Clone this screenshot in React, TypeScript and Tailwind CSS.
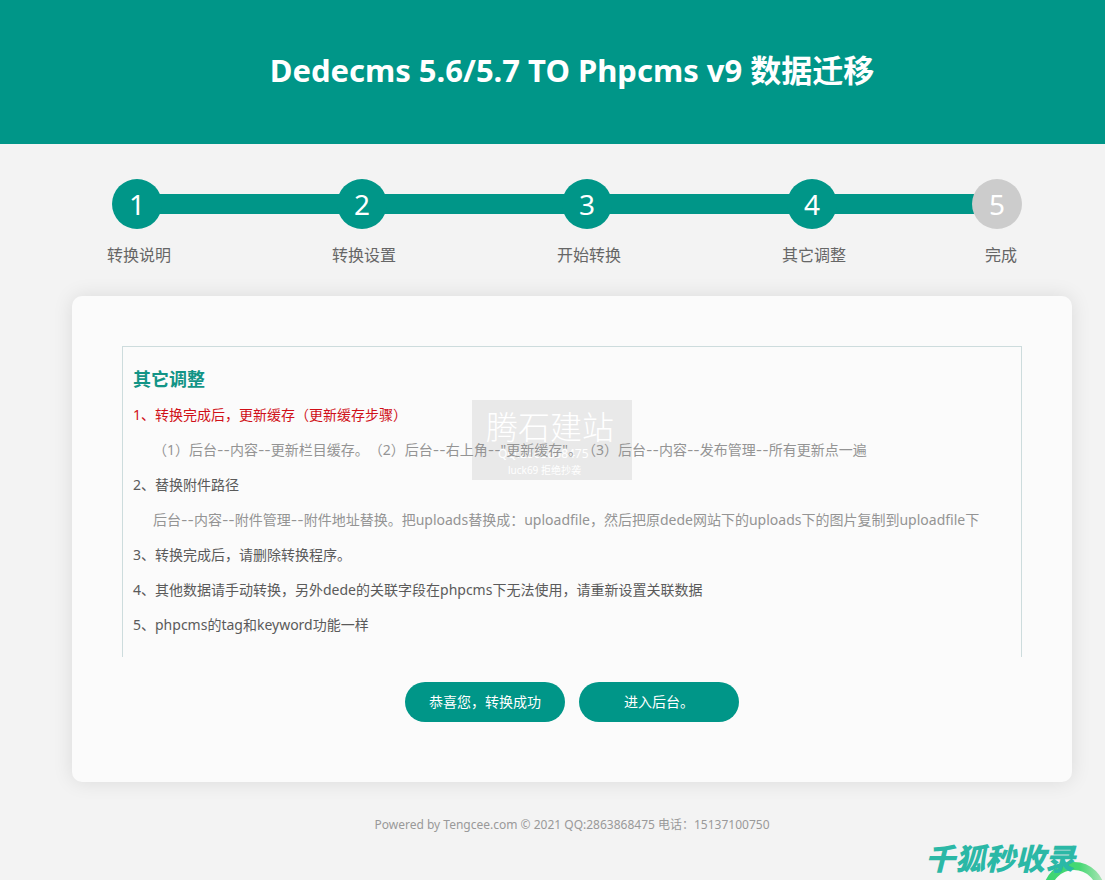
import React from 'react';

const steps = [
  { no: 1, label: '转换说明', done: true },
  { no: 2, label: '转换设置', done: true },
  { no: 3, label: '开始转换', done: true },
  { no: 4, label: '其它调整', done: true },
  { no: 5, label: '完成', done: false },
];

const notes = [
  { text: '1、转换完成后，更新缓存（更新缓存步骤）', style: 'text-[#d01018]' },
  {
    text: '（1）后台--内容--更新栏目缓存。（2）后台--右上角--"更新缓存"。（3）后台--内容--发布管理--所有更新点一遍',
    style: 'pl-5 text-[#949494]',
  },
  { text: '2、替换附件路径', style: 'text-[#5a5a5a]' },
  {
    text: '后台--内容--附件管理--附件地址替换。把uploads替换成：uploadfile，然后把原dede网站下的uploads下的图片复制到uploadfile下',
    style: 'pl-5 text-[#949494]',
  },
  { text: '3、转换完成后，请删除转换程序。', style: 'text-[#5a5a5a]' },
  { text: '4、其他数据请手动转换，另外dede的关联字段在phpcms下无法使用，请重新设置关联数据', style: 'text-[#5a5a5a]' },
  { text: '5、phpcms的tag和keyword功能一样', style: 'text-[#5a5a5a]' },
];

const Steps = () => (
  <ol className="grid grid-cols-[225fr_225fr_225fr_185fr_50px] pl-10 pr-[50px] pt-[35px]">
    {steps.map((step, i) => {
      const last = i === steps.length - 1;
      return (
        <li key={step.no}>
          <div className="flex items-center">
            <span
              className={`relative z-10 flex h-[50px] w-[50px] shrink-0 items-center justify-center rounded-full text-[28px] leading-none text-white ${
                step.done ? 'bg-[#009688]' : 'bg-[#cccccc]'
              }`}
            >
              {step.no}
            </span>
            {!last && <span className="-mx-1 h-5 flex-1 bg-[#009688]" />}
          </div>
          <p className={`mt-[14px] text-base text-[#666666] ${last ? 'pr-[5px] text-right' : '-ml-[5px]'}`}>
            {step.label}
          </p>
        </li>
      );
    })}
  </ol>
);

// Menu paths use the wider Inter hyphen between levels
const NoteText = ({ text }: { text: string }) => (
  <>
    {text.split('--').map((part, i) => (
      <React.Fragment key={i}>
        {i > 0 && <span className="font-['Inter',sans-serif]">--</span>}
        {part}
      </React.Fragment>
    ))}
  </>
);

// Stamp sits behind the notes so they stay readable
const Stamp = () => (
  <div className="pointer-events-none absolute left-1/2 top-[53px] h-20 w-40 -translate-x-[100px] bg-[#e9e9e9] pt-2 text-white">
    <p className="pl-[14px] text-[32px] font-light leading-[38px]">腾石建站</p>
    <p className="pl-[26px] text-xs leading-4">QQ:2863868475</p>
    <p className="pl-[36px] text-[10px] leading-4">luck69 拒绝抄袭</p>
  </div>
);

const CornerBadge = () => (
  <div className="absolute bottom-0 right-0 h-10 w-[185px]">
    <svg className="absolute right-0 top-0 h-10 w-[85px]" viewBox="0 0 85 40" fill="none">
      <defs>
        <linearGradient id="ring" x1="0" y1="0" x2="1" y2="0">
          <stop offset="0" stopColor="#3fd573" />
          <stop offset="0.6" stopColor="#45d873" />
          <stop offset="1" stopColor="#a5e3b2" />
        </linearGradient>
      </defs>
      <circle cx="54" cy="53" r="27" fill="#fafafa" stroke="url(#ring)" strokeWidth="8" />
    </svg>
    <span className="relative block pl-[5px] text-[30px] font-black italic leading-[38px] text-[#2bb8a6]">
      千狐秒收录
    </span>
  </div>
);

const App = () => {
  return (
    <div className="relative min-h-screen overflow-hidden bg-[#f3f3f3] font-['Noto_Sans','Noto_Sans_CJK_SC',sans-serif] [text-spacing-trim:space-all]">
      <header className="bg-[#009688] pb-[50px] pl-[39px] pt-[46px] text-center">
        <h1 className="text-[31px] font-bold leading-[48px] text-white">Dedecms 5.6/5.7 TO Phpcms v9 数据迁移</h1>
      </header>

      <div className="pl-[39px]">
        <main className="mx-auto max-w-[1000px]">
          <Steps />

          <section className="mt-[29px] rounded-[10px] bg-[#fbfbfb] px-[50px] pb-[60px] pt-[50px] shadow-[0_0_20px_rgba(0,0,0,0.1)]">
            <div className="relative border border-b-0 border-[#cddcdd] px-[10px] py-[15px]">
              <Stamp />
              <h2 className="text-lg font-bold leading-[35px] text-[#129486]">其它调整</h2>
              {notes.map((note) => (
                <p key={note.text} className={`relative text-sm leading-[35px] ${note.style}`}>
                  <NoteText text={note.text} />
                </p>
              ))}
            </div>

            <div className="mt-[25px] flex justify-center gap-[14px]">
              <button type="button" className="h-10 w-40 rounded-full bg-[#009688] text-sm text-white">
                恭喜您，转换成功
              </button>
              <button type="button" className="h-10 w-40 rounded-full bg-[#009688] text-sm text-white">
                进入后台。
              </button>
            </div>
          </section>
        </main>

        <footer className="py-[34px] text-center text-xs leading-[18px] text-[#999999]">
          Powered by Tengcee.com © 2021 QQ:2863868475 电话：15137100750
        </footer>
      </div>

      <CornerBadge />
    </div>
  );
};

export default App;
